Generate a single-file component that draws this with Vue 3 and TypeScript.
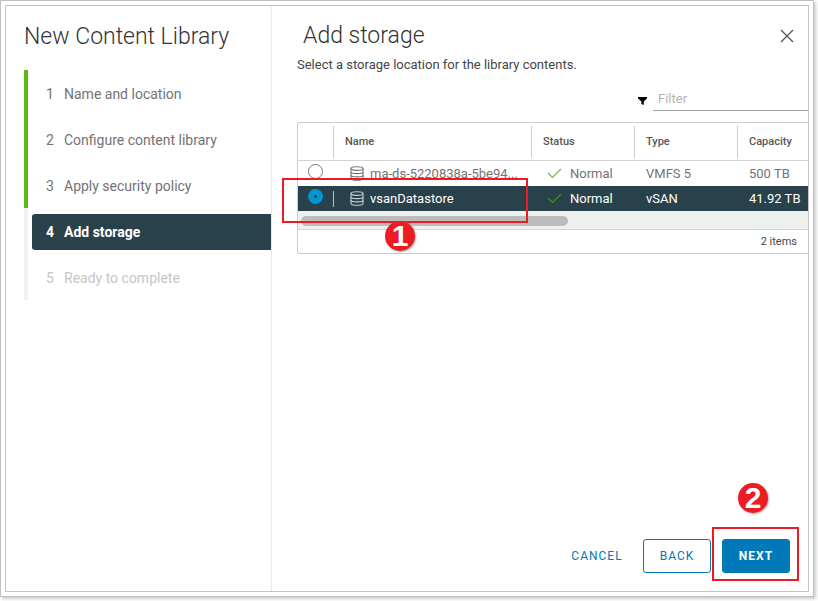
<script setup lang="ts">
import { ref } from 'vue'

interface Step {
  label: string
  state: 'done' | 'active' | 'pending'
}

interface Datastore {
  name: string
  status: string
  type: string
  capacity: string
}

const steps: Step[] = [
  { label: 'Name and location', state: 'done' },
  { label: 'Configure content library', state: 'done' },
  { label: 'Apply security policy', state: 'done' },
  { label: 'Add storage', state: 'active' },
  { label: 'Ready to complete', state: 'pending' },
]

const datastores: Datastore[] = [
  { name: 'ma-ds-5220838a-5be94...', status: 'Normal', type: 'VMFS 5', capacity: '500 TB' },
  { name: 'vsanDatastore', status: 'Normal', type: 'vSAN', capacity: '41.92 TB' },
]

const selected = ref('vsanDatastore')
const filter = ref('')
</script>

<template>
  <div class="frame">
    <div class="dialog">
      <nav class="sidebar" aria-label="Wizard steps">
        <h1 class="title">New Content Library</h1>
        <ol class="steps">
          <li v-for="(step, i) in steps" :key="step.label" class="step" :class="step.state">
            <button class="step-btn" type="button" :disabled="step.state === 'pending'">
              <span class="num">{{ i + 1 }}</span>
              <span>{{ step.label }}</span>
            </button>
          </li>
        </ol>
      </nav>

      <main class="main">
        <header class="head">
          <h2 class="title">Add storage</h2>
          <button class="close" type="button" aria-label="Close">
            <svg width="14" height="14" viewBox="0 0 14 14"><path d="M1 1L13 13M13 1L1 13" stroke="#555" stroke-width="1.3" fill="none" /></svg>
          </button>
        </header>
        <p class="hint">Select a storage location for the library contents.</p>

        <div class="filter">
          <label for="filter" aria-label="Filter">
            <svg width="9" height="8" viewBox="0 0 9 8"><path d="M0 0H9V1.6L5.8 4.6V8L3.4 7V4.6L0 1.6Z" fill="#000" /></svg>
          </label>
          <input id="filter" v-model="filter" type="text" placeholder="Filter" />
        </div>

        <div class="grid">
          <table>
            <colgroup>
              <col class="c-pick" /><col class="c-name" /><col class="c-mid" /><col class="c-mid" /><col />
            </colgroup>
            <thead>
              <tr>
                <th aria-label="Select"></th>
                <th><div class="th">Name</div></th>
                <th><div class="th">Status</div></th>
                <th><div class="th">Type</div></th>
                <th><div class="th">Capacity</div></th>
              </tr>
            </thead>
            <tbody>
              <tr v-for="d in datastores" :key="d.name" :class="{ selected: selected === d.name }">
                <td class="pick">
                  <input v-model="selected" type="radio" name="datastore" :value="d.name" :aria-label="d.name" />
                </td>
                <td>
                  <div class="cell name">
                    <svg class="db" width="14" height="15" viewBox="0 0 14 15" fill="none" stroke="currentColor" stroke-width="1.1">
                      <ellipse cx="7" cy="2.6" rx="6" ry="1.8" />
                      <path d="M1 2.6V12.4C1 13.6 3.6 14.3 7 14.3S13 13.6 13 12.4V2.6" />
                      <path d="M1 5.9C1 7 3.6 7.6 7 7.6S13 7 13 5.9M1 9.2C1 10.3 3.6 10.9 7 10.9S13 10.3 13 9.2" />
                    </svg>
                    <span>{{ d.name }}</span>
                  </div>
                </td>
                <td>
                  <div class="cell status">
                    <svg class="check" width="15" height="11" viewBox="0 0 15 11"><path d="M1 5L5.5 9.5L14 1" stroke="currentColor" stroke-width="1.1" fill="none" /></svg>
                    <span>{{ d.status }}</span>
                  </div>
                </td>
                <td><div class="cell">{{ d.type }}</div></td>
                <td><div class="cell">{{ d.capacity }}</div></td>
              </tr>
            </tbody>
          </table>
          <div class="scroll"><div class="thumb"></div></div>
          <div class="count">2 items</div>
          <div class="callout row-callout"></div>
          <div class="badge badge-one">1</div>
        </div>

        <footer class="actions">
          <button class="btn link" type="button">CANCEL</button>
          <button class="btn outline" type="button">BACK</button>
          <div class="next-wrap">
            <button class="btn primary" type="button">NEXT</button>
            <div class="callout next-callout"></div>
            <div class="badge badge-two">2</div>
          </div>
        </footer>
      </main>
    </div>
  </div>
</template>

<style>
body {
  background: #fff;
}
</style>

<style scoped>
.frame {
  box-sizing: border-box;
  display: flex;
  min-height: calc(100vh - 4px);
  margin: 0 4px 4px 0;
  padding: 4px;
  border: 1px solid #c0c0c0;
  box-shadow: 2px 2px 3px #ccc;
  font-family: Roboto, "Liberation Sans", sans-serif;
  color: #454545;
}
.dialog {
  display: flex;
  flex: 1;
  min-width: 0;
  border: 1px solid #c4c4c4;
}
.title {
  margin: 0;
  font-size: 23px;
  line-height: 28px;
  font-weight: 300;
  color: #333;
}
.sidebar {
  box-sizing: border-box;
  flex: 0 0 266px;
  padding: 17px 0 0 18px;
  border-right: 1px solid #eaeaea;
}
.steps {
  margin: 19px 0 0;
  padding: 0;
  list-style: none;
}
.step {
  box-sizing: border-box;
  height: 46px;
  padding: 6px 0 4px 4px;
  border-left: 4px solid #eef2f1;
}
.step.done {
  border-left-color: #5eb715;
}
.step-btn {
  display: flex;
  align-items: center;
  width: 100%;
  height: 36px;
  padding: 0 0 0 14px;
  border: 0;
  border-radius: 3px 0 0 3px;
  background: none;
  font: 400 14px/20px Roboto, "Liberation Sans", sans-serif;
  color: #737373;
  text-align: left;
}
.num {
  flex: 0 0 18px;
}
.step.active .step-btn {
  background: #29414a;
  color: #fff;
  font-weight: 700;
}
.step.pending .step-btn {
  color: #c6c6c6;
}
.main {
  display: flex;
  flex: 1;
  flex-direction: column;
  min-width: 0;
  padding: 16px 0 18px 25px;
}
.head {
  display: flex;
  align-items: center;
  justify-content: space-between;
  padding: 0 14px 0 6px;
}
.close {
  display: flex;
  padding: 0;
  border: 0;
  background: none;
}
.hint {
  margin: 5px 0 0;
  font-size: 13px;
  line-height: 20px;
}
.filter {
  display: flex;
  align-items: center;
  justify-content: flex-end;
  gap: 6px;
  margin-top: 12px;
}
.filter input {
  box-sizing: border-box;
  width: 155px;
  height: 24px;
  padding: 0 5px;
  border: 0;
  border-bottom: 1px solid #a5a5a5;
  background: none;
  font: 400 13px/20px Roboto, "Liberation Sans", sans-serif;
  color: #454545;
}
.filter input::placeholder {
  color: #b4b4b4;
}
.grid {
  position: relative;
  margin-top: 11px;
  border: 1px solid #ccc;
  border-right: 0;
  border-radius: 3px 0 0 3px;
}
table {
  width: 100%;
  table-layout: fixed;
  border-collapse: collapse;
}
.c-pick {
  width: 35px;
}
.c-name {
  width: 198px;
}
.c-mid {
  width: 103px;
}
th,
td {
  padding: 0;
  text-align: left;
}
th {
  height: 37px;
  border-bottom: 1px solid #d4d4d4;
}
.th {
  padding-left: 11px;
  border-left: 1px solid #ccc;
  font-size: 11px;
  line-height: 32px;
  font-weight: 500;
  color: #565656;
}
td {
  height: 25px;
  font-size: 13px;
  color: #737373;
}
.cell {
  display: flex;
  align-items: center;
  padding-left: 12px;
  line-height: 20px;
  white-space: nowrap;
}
.cell.name {
  gap: 6px;
  padding-left: 16px;
  border-left: 1px solid transparent;
}
.cell.status {
  gap: 8px;
  padding-left: 16px;
}
.db {
  flex: none;
}
.check {
  color: #6cbb3c;
}
.pick {
  vertical-align: top;
}
.pick input {
  appearance: none;
  display: block;
  box-sizing: border-box;
  width: 15px;
  height: 15px;
  margin: 3px 0 0 10px;
  border: 1px solid #777;
  border-radius: 50%;
  background: #fff;
}
.pick input:checked {
  border: 6px solid #0095d3;
  background: #29414a;
}
.selected td {
  background: #29414a;
  color: #fff;
}
.selected .cell.name {
  border-left-color: #b4bdc1;
  line-height: 16px;
}
.selected .db {
  color: #c8d0d3;
}
.selected .check {
  color: #48901f;
}
.scroll {
  padding: 5px 3px 3px;
  border-bottom: 1px solid #d4d4d4;
  background: #eef2ef;
}
.thumb {
  width: 53%;
  height: 10px;
  border-radius: 5px;
  background: #bcbcbc;
}
.count {
  padding-right: 11px;
  font-size: 11px;
  line-height: 23px;
  text-align: right;
}
.callout {
  position: absolute;
  border: 2px solid #ed1c24;
}
.row-callout {
  top: 55px;
  left: -16px;
  width: 242px;
  height: 41px;
}
.badge {
  position: absolute;
  width: 30px;
  height: 30px;
  border-radius: 50%;
  background: #ed1c24;
  box-shadow: 1px 1px 2px #aaa;
  color: #fff;
  font: 700 30px/30px "Liberation Sans", Arial, sans-serif;
  text-align: center;
}
.badge-one {
  top: 98px;
  left: 87px;
}
.actions {
  display: flex;
  align-items: center;
  justify-content: flex-end;
  margin-top: auto;
  padding-right: 18px;
}
.btn {
  box-sizing: border-box;
  height: 34px;
  min-width: 68px;
  padding: 0;
  border: 1px solid #0079b8;
  border-radius: 3px;
  background: #fff;
  font: 400 12px/20px Roboto, "Liberation Sans", sans-serif;
  letter-spacing: 1px;
  color: #0079b8;
}
.link {
  margin-right: 12px;
  border-color: transparent;
}
.next-wrap {
  position: relative;
  margin-left: 11px;
}
.primary {
  display: block;
  background: #0079b8;
  color: #fff;
  font-weight: 700;
}
.next-callout {
  top: -12px;
  left: -10px;
  width: 83px;
  height: 50px;
}
.badge-two {
  top: -56px;
  left: 16px;
}
</style>
